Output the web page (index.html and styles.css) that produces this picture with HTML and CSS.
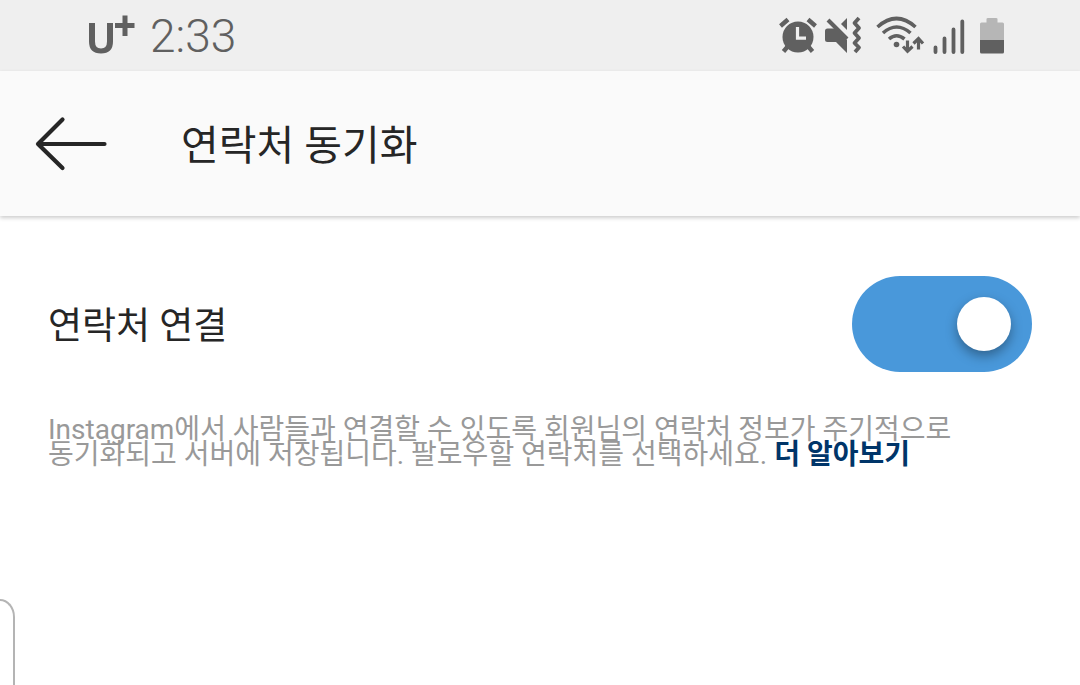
FILE: index.html
```html
<!DOCTYPE html>
<html lang="ko">
<head>
<meta charset="utf-8">
<meta name="viewport" content="width=device-width, initial-scale=1">
<title>연락처 동기화</title>
<link rel="stylesheet" href="styles.css">
</head>
<body>
<div class="status-bar">
  <div class="status-left">
    <svg class="carrier" width="50" height="40" viewBox="85 15 50 40" role="img" aria-label="U+">
      <path d="M89 23V41.500Q89 53.500 101 53.500T113 41.500V23H107V41.500Q107 48.500 101 48.500T95 41.500V23Z" fill="#606060"/>
      <path d="M125 15.500V36M115 25.500H134.500" stroke="#606060" stroke-width="5" fill="none"/>
    </svg>
    <span class="clock">2:33</span>
  </div>
  <svg class="status-icons" width="228" height="40" viewBox="778 14 228 40" aria-hidden="true">
    <g fill="none" stroke="#606060" stroke-width="4.400">
      <path d="M780.500 25L788 18.500M808 18.500L815.500 25"/>
      <path d="M789 44L783.500 50.500M807 44L812.500 50.500"/>
    </g>
    <circle cx="798" cy="36" r="15.500" fill="#606060"/>
    <path d="M797.500 26V37.200H806" fill="none" stroke="#efefef" stroke-width="3.200"/>
    <path d="M825 30Q825 27.500 827.500 27.500H835.500L847 39V52L836 41H827.500Q825 41 825 38.500Z" fill="#606060"/>
    <path d="M841 23L847 17V29Z" fill="#606060"/>
    <path d="M828 19L847 38" stroke="#606060" stroke-width="4"/>
    <path d="M859 17L854.500 22L859 27L854.500 32L859 37L854.500 42L859 46.500L855 51" fill="none" stroke="#606060" stroke-width="3.800" stroke-linejoin="round"/>
    <g fill="none" stroke="#606060" stroke-width="3.600">
      <path d="M877.500 26Q896.500 9 915.500 26"/>
      <path d="M883 32Q896.500 20 910.500 32"/>
      <path d="M889 38Q896.500 31.500 904.500 38"/>
    </g>
    <circle cx="896.500" cy="43.500" r="2.800" fill="#606060"/>
    <g fill="none" stroke="#606060" stroke-width="3.200">
      <path d="M907.500 39.500V50M903 45.500L907.500 50.200L912.500 45.500"/>
      <path d="M918.500 48.500V38M913.500 42.500L918.500 37.500L923 42.500"/>
    </g>
    <g stroke="#606060" stroke-width="3.800" stroke-linecap="round">
      <path d="M935.500 46.500V51M944.500 37.500V51M953.500 28.500V51M962.300 20.500V51"/>
    </g>
    <path d="M980 39V23Q980 21.500 981.500 21.500H986.500V18Q986.500 17 988 17H996Q997.500 17 997.500 18V21.500H1002.500Q1004 21.500 1004 23V39Z" fill="#b6b6b6"/>
    <path d="M980 39H1004V51Q1004 52.500 1002.500 52.500H981.500Q980 52.500 980 51Z" fill="#606060"/>
  </svg>
</div>
<header class="toolbar">
  <button class="back" type="button" aria-label="뒤로">
    <svg width="74" height="56" viewBox="34 115 74 56" fill="none" stroke="#262626" stroke-width="4.200" stroke-linecap="round" stroke-linejoin="round">
      <path d="M62.500 118.500L38 143L62.500 167M38 143H104.500"/>
    </svg>
  </button>
  <h1 class="title">연락처 동기화</h1>
</header>
<main class="content">
  <div class="setting">
    <label class="setting-label" for="sync">연락처 연결</label>
    <input class="switch" id="sync" type="checkbox" role="switch" checked>
  </div>
  <p class="description">Instagram에서 사람들과 연결할 수 있도록 회원님의 연락처 정보가 주기적으로 동기화되고 서버에 저장됩니다. 팔로우할 연락처를 선택하세요. <a class="more" href="#more">더 알아보기</a></p>
</main>
<div class="edge-panel" aria-hidden="true"></div>
</body>
</html>
```
FILE: styles.css
```css
* {
  box-sizing: border-box;
}

body {
  margin: 0;
  min-height: 100vh;
  position: relative;
  overflow: hidden;
  background: #fff;
  color: #262626;
  font-family: Roboto, "Noto Sans CJK KR", sans-serif;
}

.status-bar {
  display: flex;
  align-items: center;
  justify-content: space-between;
  height: 71px;
  padding: 0 74px 2px 85px;
  background: #efefef;
}

.status-left {
  display: flex;
  align-items: center;
  gap: 15px;
}

.clock {
  padding-top: 2px;
  color: #606060;
  font-size: 46px;
  font-weight: 300;
  line-height: 56px;
}

.toolbar {
  display: flex;
  align-items: center;
  gap: 73px;
  height: 145px;
  padding: 0 34px;
  background: #fafafa;
  box-shadow: 0 2px 4px rgba(0, 0, 0, 0.2);
}

.back {
  display: flex;
  padding: 0;
  border: 0;
  background: none;
}

.title {
  margin: 0;
  padding-top: 4px;
  font-size: 41px;
  font-weight: 400;
  line-height: 60px;
}

.content {
  padding: 60px 48px;
}

.setting {
  display: flex;
  align-items: center;
  justify-content: space-between;
}

.setting-label {
  padding-top: 6px;
  font-size: 37px;
  line-height: 56px;
}

.switch {
  appearance: none;
  display: flex;
  align-items: center;
  justify-content: flex-end;
  width: 180px;
  height: 96px;
  margin: 0;
  padding: 0 21px;
  border-radius: 48px;
  background: #4998da;
}

.switch::before {
  content: "";
  width: 54px;
  height: 54px;
  border-radius: 50%;
  background: #fff;
  box-shadow: 0 5px 12px rgba(0, 0, 0, 0.35);
}

.switch:not(:checked) {
  justify-content: flex-start;
  background: #b8b8b8;
}

.description {
  margin: 45px 0 0;
  max-width: 930px;
  color: #999;
  font-size: 28px;
  line-height: 25px;
  word-break: keep-all;
}

.more {
  color: #003569;
  font-weight: 700;
  text-decoration: none;
}

.edge-panel {
  position: absolute;
  left: 0;
  bottom: 0;
  width: 15px;
  height: 86px;
  border-top: 2px solid #b4b4b4;
  border-right: 2px solid #b4b4b4;
  border-top-right-radius: 15px 18px;
}
```
